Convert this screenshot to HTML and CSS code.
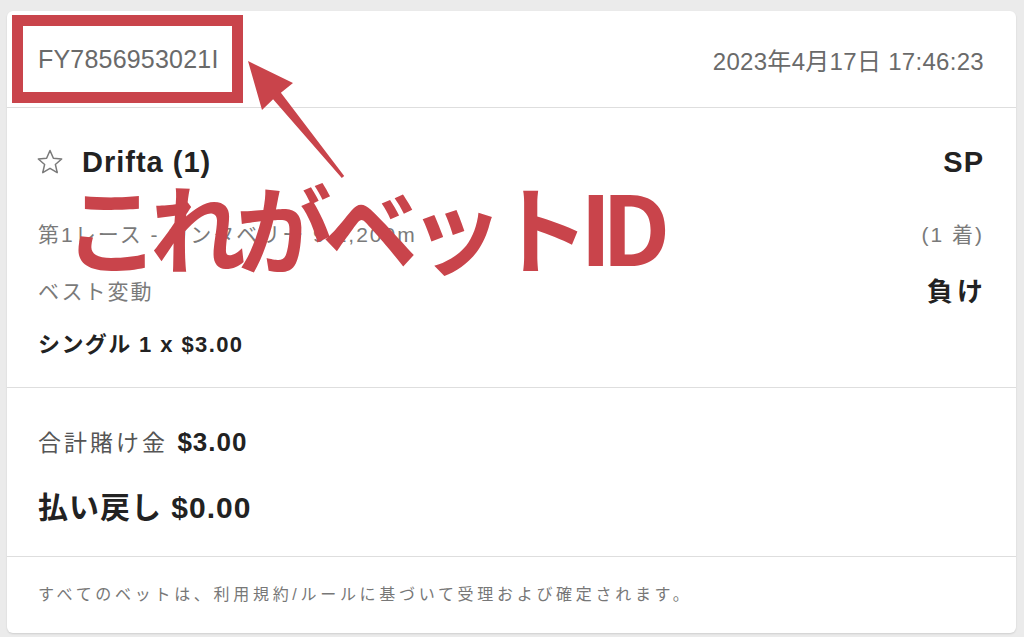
FILE: index.html
```html
<!DOCTYPE html>
<html lang="ja">
<head>
  <meta charset="UTF-8" />
  <title>ベット詳細</title>
  <link rel="stylesheet" href="styles.css">
</head>
<body>
  <div class="bet-card">
    <div class="bet-header">
      <span class="bet-id">FY7856953021I</span>
      <span class="bet-date">2023年4月17日 17:46:23</span>
    </div>

    <div class="bet-selection">
      <div class="row">
        <div class="runner">
          <svg class="star" viewBox="0 0 24 24" width="28" height="28">
            <path d="M12 2.2l2.9 6.6 7.1.6-5.4 4.7 1.6 7-6.2-3.7-6.2 3.7 1.6-7L2 9.4l7.1-.6z" fill="none" stroke="#7a7a7a" stroke-width="1.3" stroke-linejoin="round"/>
          </svg>
          <span class="runner-name">Drifta (1)</span>
        </div>
        <span class="price">SP</span>
      </div>
      <div class="row race-row">
        <span class="muted">第1レース - カンタベリー 9 1,200m</span>
        <span class="muted">(1 着)</span>
      </div>
      <div class="row result-row">
        <span class="muted">ベスト変動</span>
        <span class="result">負け</span>
      </div>
      <div class="row bet-type">シングル 1 x $3.00</div>
    </div>

    <div class="bet-totals">
      <div class="stake">合計賭け金 <b>$3.00</b></div>
      <div class="payout">払い戻し $0.00</div>
    </div>

    <div class="bet-footer">すべてのベットは、利用規約/ルールに基づいて受理および確定されます。</div>
  </div>

  <!-- annotation overlay -->
  <svg class="annotation" width="1024" height="637" viewBox="0 0 1024 637">
    <rect x="17.5" y="20.5" width="220" height="77" fill="none" stroke="#c9444b" stroke-width="11"/>
    <polygon points="248,61 293,83 280.9,92.8 344.2,176 341.8,178 273.1,99.2 262,110" fill="#c9444b"/>
  </svg>
  <div class="callout">これがベットID</div>
</body>
</html>
```

FILE: styles.css
```css
body {
  margin: 0;
  padding: 11px 8px 6px 7px;
  background-color: #ebebeb;
  font-family: 'Liberation Sans', 'Noto Sans CJK JP', sans-serif;
  color: #222;
}

.bet-card {
  background-color: #fff;
  border-radius: 6px;
  box-shadow: 0 1px 2px rgba(0, 0, 0, 0.12);
}

.bet-header {
  display: flex;
  justify-content: space-between;
  align-items: center;
  box-sizing: border-box;
  height: 97px;
  padding: 0 32px 0 31px;
  border-bottom: 1px solid #dedede;
  color: #6a6a6a;
  font-size: 24px;
}

.bet-id {
  font-size: 25px;
  letter-spacing: 0.2px;
}

.bet-date {
  letter-spacing: 0.3px;
}

.bet-selection {
  padding: 39px 32px 27px 31px;
  border-bottom: 1px solid #dedede;
}

.row {
  display: flex;
  justify-content: space-between;
  align-items: center;
  line-height: 30px;
}

.runner {
  display: flex;
  align-items: center;
  gap: 18px;
}

.star {
  display: block;
  margin-left: -2px;
}

.runner-name,
.price {
  font-size: 29px;
  font-weight: bold;
  letter-spacing: 1px;
}

.muted {
  color: #7a7a7a;
  font-size: 21px;
  letter-spacing: 2px;
}

.race-row {
  margin-top: 43px;
}

.result-row {
  margin-top: 27px;
}

.result {
  font-size: 26px;
  font-weight: bold;
  letter-spacing: 4px;
  margin-right: -3px;
}

.bet-type {
  margin-top: 23px;
  font-size: 22px;
  font-weight: bold;
  letter-spacing: 1.4px;
}

.bet-totals {
  padding: 39px 32px 33px 31px;
  border-bottom: 1px solid #dedede;
}

.stake {
  line-height: 30px;
  font-size: 23px;
  color: #555;
  letter-spacing: 3px;
}

.stake b {
  color: #222;
  font-size: 26px;
  letter-spacing: 1px;
}

.payout {
  margin-top: 35px;
  line-height: 30px;
  font-size: 30px;
  font-weight: bold;
  letter-spacing: 1px;
}

.bet-footer {
  padding: 26px 31px 26px;
  line-height: 24px;
  font-size: 16px;
  color: #777;
  letter-spacing: 3.7px;
}

.annotation {
  position: absolute;
  top: 0;
  left: 0;
  pointer-events: none;
}

.callout {
  position: absolute;
  top: 177px;
  left: 64px;
  font-family: 'Noto Sans CJK JP', sans-serif;
  font-size: 96px;
  line-height: 96px;
  font-weight: bold;
  letter-spacing: -10px;
  color: #c9444b;
  white-space: nowrap;
}
```
